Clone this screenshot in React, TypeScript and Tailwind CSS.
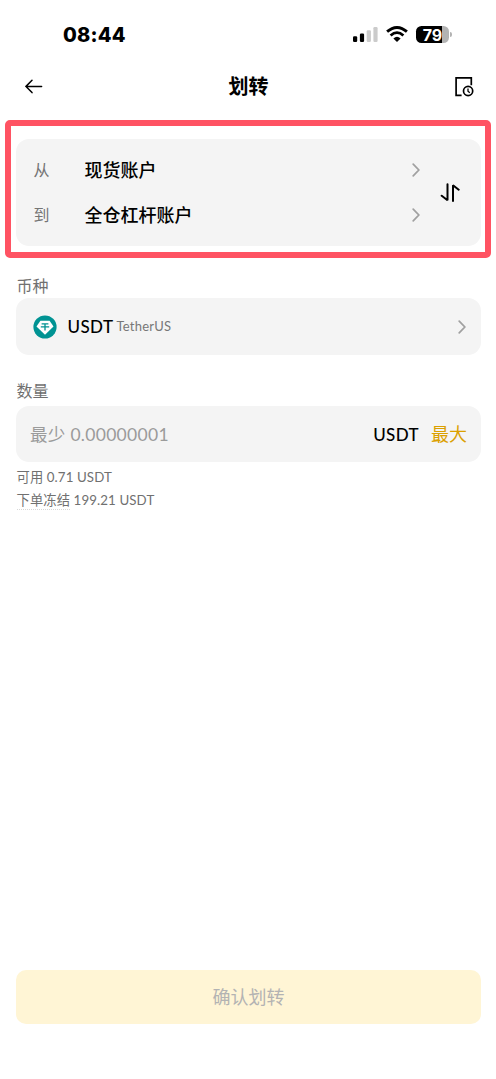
import type { ReactNode } from "react";

interface AccountRowProps {
  label: string;
  value: string;
}

function Chevron() {
  return (
    <svg
      className="h-[14px] w-[8px] shrink-0"
      viewBox="0 0 8 14"
      fill="none"
      stroke="#a0a0a0"
      strokeWidth={1.7}
      strokeLinecap="round"
    >
      <path d="M1.2 1.2L6.8 7L1.2 12.8" />
    </svg>
  );
}

function StatusBar() {
  return (
    <div className="flex h-[60px] items-start justify-between pt-[24px] pr-[44px] pl-[63px]">
      <span className="font-['Inter'] text-[20px] leading-[22px] font-extrabold tracking-[0.2px]">
        08:44
      </span>
      <div className="flex items-center pt-[2px]">
        {/* Sinal */}
        <svg className="h-[17px] w-[25px]" viewBox="0 0 25 17">
          <rect x="0" y="10.3" width="4.2" height="5.7" rx="1.2" fill="#000" />
          <rect x="6.9" y="7.5" width="4.2" height="8.5" rx="1.2" fill="#000" />
          <rect x="13.7" y="4.3" width="4.2" height="11.7" rx="1.2" fill="#cbcbcb" />
          <rect x="20.4" y="1" width="4.2" height="15" rx="1.2" fill="#cbcbcb" />
        </svg>
        {/* Wi-Fi */}
        <svg className="ml-[8px] h-[17px] w-[22px]" viewBox="0 0 22 17" fill="none">
          <path d="M1.1 5.7Q11 -2.7 20.9 5.7" stroke="#000" strokeWidth={2.9} />
          <path d="M4.6 9.5Q11 3.7 17.4 9.5" stroke="#000" strokeWidth={2.8} />
          <path d="M7.4 12.4Q11 9.1 14.6 12.4L11 16Z" fill="#000" />
        </svg>
        {/* Bateria */}
        <div className="ml-[8px] flex items-center">
          <div className="flex h-[17px] w-[33px] items-center justify-center rounded-[5.5px] bg-[linear-gradient(to_right,#000_79%,#b3b3b3_79%)]">
            <span className="font-['Inter'] text-[16px] leading-[20px] font-bold text-white">
              79
            </span>
          </div>
          <div className="ml-[1px] h-[5px] w-[2px] rounded-r-full bg-[#b3b3b3]" />
        </div>
      </div>
    </div>
  );
}

function Header() {
  return (
    <header className="flex h-[60px] items-start justify-between pt-[12px] pr-[22px] pl-[25px]">
      <svg
        className="mt-[7px] h-[15px] w-[18px]"
        viewBox="0 0 18 15"
        fill="none"
        stroke="#000"
        strokeWidth={1.5}
        strokeLinecap="round"
      >
        <path d="M1 7.4H16.6M7 1.3L1 7.4L7 13.6" />
      </svg>
      <h1 className="text-[20px] leading-[28px] font-bold">划转</h1>
      <svg
        className="mt-[4px] h-[22px] w-[20px]"
        viewBox="0 0 20 22"
        fill="none"
        stroke="#000"
        strokeWidth={1.7}
      >
        <path d="M17.3 9.2V1.8H2.1V19.3H7.6" />
        <circle cx="14.1" cy="15" r="4.6" />
        <path d="M14 12.4V15.3L15.8 16.8" strokeWidth={1.3} />
      </svg>
    </header>
  );
}

function AccountRow({ label, value }: AccountRowProps) {
  return (
    <div className="flex h-[45px] items-center">
      <span className="w-[51px] text-[16px] text-[#757575]">{label}</span>
      <span className="flex-1 pt-[1px] text-[18px] font-medium">{value}</span>
      <Chevron />
    </div>
  );
}

function TetherIcon() {
  return (
    <svg className="h-[24px] w-[24px]" viewBox="0 0 24 24">
      <circle cx="12" cy="12" r="11.6" fill="#009393" />
      <path d="M7.4 5.7H16.6L20.5 11.4L12 19.8L3.5 11.4Z" fill="#fff" />
      <path
        d="M8.6 8.9H15.4M12 8.9V15.6M7.8 11.9H16.2"
        fill="none"
        stroke="#009393"
        strokeWidth={1.3}
      />
    </svg>
  );
}

function Label({ children }: { children: ReactNode }) {
  return <h2 className="pl-[0.5px] text-[16px] leading-[24px] text-[#707070]">{children}</h2>;
}

export default function App() {
  return (
    <main className="flex h-[1079px] w-[496px] flex-col bg-white font-['Lato','Noto_Sans_CJK_SC',sans-serif] text-black">
      <StatusBar />
      <Header />

      {/* Contas de origem e destino */}
      <section className="mr-[5px] ml-[5px] h-[138px] rounded-[5px] border-[6px] border-[#ff5363] pt-[13px] pr-[4px] pl-[5px]">
        <div className="flex h-[107px] items-center rounded-[13px] bg-[#f4f4f4] pl-[17.5px]">
          <div className="w-[386.5px] pb-[1px]">
            <AccountRow label="从" value="现货账户" />
            <AccountRow label="到" value="全仓杠杆账户" />
          </div>
          <svg
            className="ml-[20px] h-[20px] w-[20px]"
            viewBox="0 0 20 20"
            fill="none"
            stroke="#000"
            strokeWidth={2}
            strokeLinecap="round"
            strokeLinejoin="bevel"
          >
            <path d="M7.5 1.2V17.2L1.7 12.7M13 18V2.2L18.7 6.7" />
          </svg>
        </div>
      </section>

      <section className="mt-[16px] pr-[15px] pl-[16px]">
        <Label>币种</Label>
        <div className="flex h-[57px] items-center rounded-[13px] bg-[#f4f4f4] pr-[15px] pl-[17px]">
          <TetherIcon />
          <span className="ml-[10.5px] text-[17px] font-medium tracking-[0.4px]">USDT</span>
          <span className="ml-[3px] pt-[1px] text-[13px] tracking-[0.25px] text-[#777]">
            TetherUS
          </span>
          <div className="ml-auto">
            <Chevron />
          </div>
        </div>
      </section>

      <section className="mt-[24px] pr-[15px] pl-[16px]">
        <Label>数量</Label>
        <div className="mt-[3px] flex h-[56px] items-center rounded-[13px] bg-[#f4f4f4] px-[14px]">
          <span className="flex-1 pt-[2px] text-[17.5px] tracking-[0.3px] text-[#9b9b9b]">
            最少 0.00000001
          </span>
          <span className="pt-[1px] text-[17px] font-medium tracking-[0.4px]">USDT</span>
          <span className="ml-[12px] text-[18px] text-[#dba000]">最大</span>
        </div>
        <p className="mt-[5px] pl-[0.5px] text-[13.3px] leading-[20px] tracking-[0.1px] text-[#707070]">
          可用 0.71 USDT
        </p>
        <p className="mt-[3px] pl-[0.5px] text-[13.3px] leading-[20px] tracking-[0.1px] text-[#707070]">
          <span className="inline-block h-[20px] border-b border-dotted border-[#d8d8d8] align-top">
            下单冻结
          </span>{" "}
          199.21 USDT
        </p>
      </section>

      <div className="mt-auto pr-[15px] pb-[55px] pl-[16px]">
        <button className="h-[54px] w-full rounded-[10px] bg-[#fff5d5] text-[18px] text-[#b3b3b3]">
          确认划转
        </button>
      </div>
    </main>
  );
}
